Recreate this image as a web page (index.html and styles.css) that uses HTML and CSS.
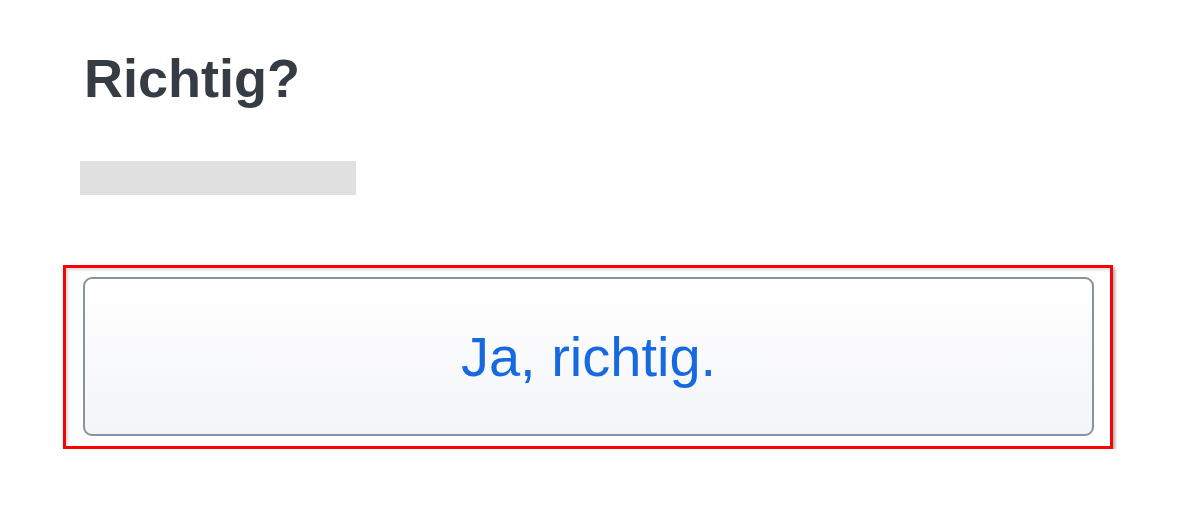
FILE: index.html
```html
<!DOCTYPE html>
<html lang="de">
<head>
  <meta charset="UTF-8">
  <meta name="viewport" content="width=device-width, initial-scale=1.0">
  <title>Richtig?</title>
  <link rel="stylesheet" href="styles.css">
</head>
<body>
  <div class="page">
    <h1 class="question">Richtig?</h1>
    <div class="placeholder"></div>
    <div class="highlight">
      <button class="answer" type="button">Ja, richtig.</button>
    </div>
  </div>
</body>
</html>
```

FILE: styles.css
```css
body {
  margin: 0;
  background: #fff;
  font-family: "Liberation Sans", Arial, sans-serif;
}
.page {
  padding: 46px 67px 0 63px;
}
.question {
  margin: 0 0 0 21px;
  font-size: 54px;
  line-height: 64px;
  font-weight: bold;
  color: #353c43;
}
.placeholder {
  width: 276px;
  height: 34px;
  margin: 51px 0 0 17px;
  background: #e0e0e0;
}
.highlight {
  margin-top: 70px;
  padding: 9px 16px 10px 17px;
  border: 3px solid #f00;
  box-shadow: 2px 3px 3px rgba(0, 0, 0, 0.35), inset 2px 2px 3px rgba(0, 0, 0, 0.14);
}
.answer {
  display: block;
  width: 100%;
  height: 159px;
  border: 2px solid #8793a1;
  border-radius: 9px;
  background: linear-gradient(#ffffff, #f4f5f8);
  color: #1769e0;
  font-family: "Liberation Sans", Arial, sans-serif;
  font-size: 56px;
  cursor: pointer;
}
```
